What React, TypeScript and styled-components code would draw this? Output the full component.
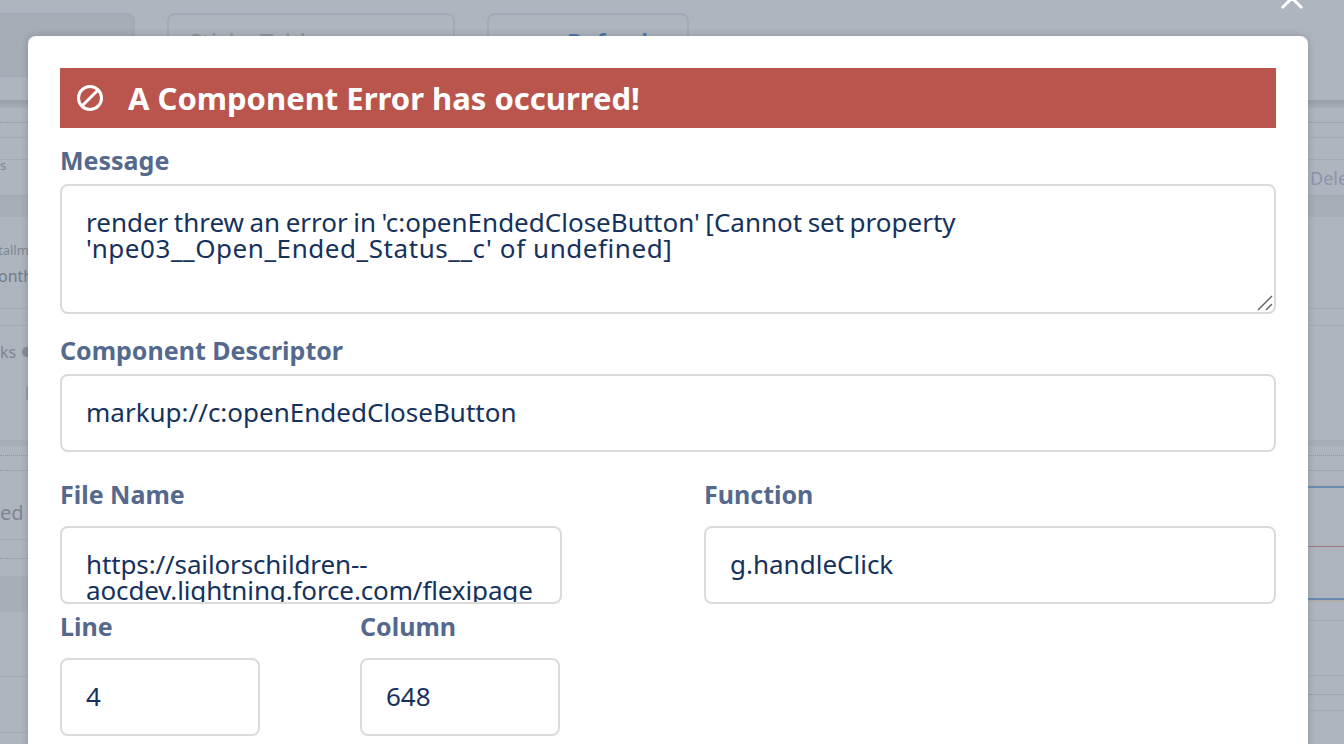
import { FunctionComponent } from "react";
import styled, { createGlobalStyle } from "styled-components";

const Global = createGlobalStyle`
  html, body {
    margin: 0;
    padding: 0;
    background: #aeb5be;
  }
  * {
    box-sizing: border-box;
  }
`;

const Page = styled.div`
  position: relative;
  width: 1344px;
  height: 744px;
  overflow: hidden;
  background: #aeb5be;
  font-family: "Noto Sans", "Open Sans", sans-serif;
`;

// the record page sitting behind the overlay
const Header = styled.div`
  display: flex;
  gap: 32px;
  height: 100px;
  padding-top: 13px;
  margin-left: -32px;
`;

const HeaderButton = styled.div<{ width: number; inset: number; dark?: boolean; link?: boolean }>`
  display: flex;
  gap: 10px;
  width: ${({ width }) => width}px;
  height: 64px;
  padding: 10px 0 0 ${({ inset }) => inset}px;
  border: 2px solid #a3aab5;
  border-radius: 8px;
  background: ${({ dark }) => (dark ? "#a6adb6" : "transparent")};
  color: ${({ link }) => (link ? "#4a74aa" : "#8f96a1")};
  font-size: 24px;
  font-weight: ${({ link }) => (link ? 600 : 400)};
  white-space: nowrap;
`;

const HeaderShadow = styled.div`
  height: 8px;
  background: linear-gradient(#979ea7, #a8afb8);
`;

const BackRow = styled.div<{
  height: number;
  fill?: string;
  line?: string;
  dotted?: boolean;
  top?: boolean;
}>`
  display: flex;
  align-items: ${({ top }) => (top ? "flex-start" : "center")};
  justify-content: space-between;
  height: ${({ height }) => height}px;
  background: ${({ fill }) => fill || "transparent"};
  border-bottom: ${({ line, dotted }) =>
    line ? `1px ${dotted ? "dotted" : "solid"} ${line}` : "none"};
  color: #7d8592;
  font-size: 20px;
  white-space: nowrap;
`;

const LeftBit = styled.div<{ lift?: number }>`
  display: flex;
  align-items: center;
  width: 28px;
  padding-bottom: ${({ lift }) => lift || 0}px;
  overflow: hidden;
`;

const RightBit = styled.span`
  width: 34px;
  overflow: hidden;
  color: #8d93ad;
  font-size: 18px;
`;

const SideStack = styled.div<{ pad: number }>`
  display: flex;
  flex-direction: column;
  width: 28px;
  padding-top: ${({ pad }) => pad}px;
  overflow: hidden;
`;

const SmallBit = styled.span`
  font-size: 13px;
  line-height: 18px;
`;

const CutBit = styled(SmallBit)`
  margin-left: -2px;
`;

const MediumBit = styled.span`
  margin: 6px 0 0 -2px;
  font-size: 16px;
  line-height: 22px;
  color: #737b88;
`;

const KeywordBit = styled.span`
  width: 22px;
  font-size: 16px;
  line-height: 18px;
`;

const HelpDot = styled.span`
  flex: none;
  width: 6px;
  height: 10px;
  border-radius: 5px 0 0 5px;
  background: #858c97;
`;

const SideMark = styled.div`
  align-self: flex-end;
  width: 2px;
  height: 13px;
  margin-top: 26px;
  background: #969da8;
`;

const LowerRows = styled.div`
  display: flex;
  justify-content: space-between;
`;

const LowerColumn = styled.div<{ width: number }>`
  width: ${({ width }) => width}px;
`;

const CloseIcon = styled.svg`
  position: absolute;
  top: -14px;
  left: 1280px;
  width: 24px;
  height: 24px;
  stroke: #fff;
  stroke-width: 3;
  stroke-linecap: square;
  fill: none;
`;

const Modal = styled.div`
  position: absolute;
  top: 36px;
  left: 28px;
  width: 1280px;
  height: 780px;
  padding: 32px;
  background: #fff;
  border-radius: 8px;
  box-shadow: 0 0 7px rgba(70, 80, 95, 0.35);
`;

const Banner = styled.div`
  display: flex;
  align-items: center;
  gap: 24px;
  height: 60px;
  padding-left: 16px;
  background: #ba554e;
  color: #fff;
  font-size: 31px;
  font-weight: 700;
`;

const BanIcon = styled.svg`
  width: 28px;
  height: 28px;
  stroke: #fff;
  stroke-width: 3;
  fill: none;
`;

const Label = styled.div<{ top: number; bottom: number }>`
  margin: ${({ top, bottom }) => `${top}px 0 ${bottom}px`};
  color: #54698d;
  font-size: 25px;
  line-height: 32px;
  font-weight: 700;
`;

const Field = styled.div<{ height: number }>`
  position: relative;
  width: 100%;
  height: ${({ height }) => height}px;
  padding: 23px 24px 0;
  border: 2px solid #dddbda;
  border-radius: 8px;
  overflow: hidden;
  color: #16325c;
  font-size: 26px;
  line-height: 26px;
`;

const TextLine = styled.div<{ tracking?: number; wordGap?: number }>`
  letter-spacing: ${({ tracking }) => tracking || 0}px;
  word-spacing: ${({ wordGap }) => wordGap || 0}px;
`;

const ResizeHandle = styled.svg`
  position: absolute;
  right: 1px;
  bottom: 1px;
  width: 16px;
  height: 16px;
  stroke: #666;
  stroke-width: 1.5;
  fill: none;
`;

const FileRow = styled.div`
  display: flex;
  justify-content: space-between;
`;

const FileColumn = styled.div<{ width: number }>`
  width: ${({ width }) => width}px;
`;

const PositionRow = styled.div`
  display: flex;
  gap: 100px;
`;

const GREY_LINE = "#a3aab3";
const DOT_LINE = "#8f95a3";
const SHADE = "#a7aeb7";

const leftRows = [
  { height: 55, line: GREY_LINE, text: "ed" },
  { height: 19, line: DOT_LINE, dotted: true },
  { height: 17 },
  { height: 36, fill: SHADE },
  { height: 65, line: GREY_LINE },
  { height: 56, line: GREY_LINE },
];

const rightRows = [
  { height: 1, fill: "#b5b1a8" },
  { height: 2, fill: "#6a8bb0" },
  { height: 59, line: "#a3757c" },
  { height: 51 },
  { height: 2, fill: "#6a8bb0" },
  { height: 2, fill: "#b0aea8" },
  { height: 19, line: GREY_LINE },
  { height: 55, line: GREY_LINE },
  { height: 19, line: DOT_LINE, dotted: true },
  { height: 16, line: GREY_LINE },
];

const App: FunctionComponent = () => {
  return (
    <Page>
      <Global />
      <Header>
        <HeaderButton width={167} inset={0} dark />
        <HeaderButton width={288} inset={20}>
          Sticky Table
        </HeaderButton>
        <HeaderButton width={202} inset={56} link>
          <span>↓</span>
          Refresh
        </HeaderButton>
      </Header>
      <HeaderShadow />
      <BackRow height={15} line={DOT_LINE} dotted />
      <BackRow height={15} line={GREY_LINE} />
      <BackRow height={22} line={GREY_LINE} />
      <BackRow height={36} line={GREY_LINE}>
        <LeftBit lift={26}>
          <SmallBit>s</SmallBit>
        </LeftBit>
        <RightBit>Dele</RightBit>
      </BackRow>
      <BackRow height={21} fill={SHADE} />
      <BackRow height={92} line={GREY_LINE} top>
        <SideStack pad={24}>
          <CutBit>tallm</CutBit>
          <MediumBit>onth</MediumBit>
        </SideStack>
      </BackRow>
      <BackRow height={17} line={GREY_LINE} />
      <BackRow height={114} top>
        <SideStack pad={17}>
          <LeftBit>
            <KeywordBit>ks</KeywordBit>
            <HelpDot />
          </LeftBit>
          <SideMark />
        </SideStack>
      </BackRow>
      <BackRow height={6} fill={SHADE} />
      <BackRow height={10} line={DOT_LINE} dotted />
      <BackRow height={15} line={DOT_LINE} dotted />
      <BackRow height={14} />
      <LowerRows>
        <LowerColumn width={28}>
          {leftRows.map((row, index) => (
            <BackRow key={index} {...row}>
              {row.text && <LeftBit>{row.text}</LeftBit>}
            </BackRow>
          ))}
        </LowerColumn>
        <LowerColumn width={36}>
          {rightRows.map((row, index) => (
            <BackRow key={index} {...row} />
          ))}
        </LowerColumn>
      </LowerRows>
      <CloseIcon viewBox="0 0 24 24">
        <path d="M3 3 L21 21 M21 3 L3 21" />
      </CloseIcon>
      <Modal>
        <Banner>
          <BanIcon viewBox="0 0 28 28">
            <circle cx="14" cy="14" r="11.5" />
            <path d="M6 22 L22 6" />
          </BanIcon>
          A Component Error has occurred!
        </Banner>
        <Label top={16} bottom={8}>
          Message
        </Label>
        <Field height={130}>
          <TextLine wordGap={-1.3}>
            render threw an error in 'c:openEndedCloseButton' [Cannot set property
          </TextLine>
          <TextLine tracking={0.57}>'npe03__Open_Ended_Status__c' of undefined]</TextLine>
          <ResizeHandle viewBox="0 0 16 16">
            <path d="M1 15 L15 1 M9 15 L15 9" />
          </ResizeHandle>
        </Field>
        <Label top={20} bottom={8}>
          Component Descriptor
        </Label>
        <Field height={78}>markup://c:openEndedCloseButton</Field>
        <FileRow>
          <FileColumn width={502}>
            <Label top={26} bottom={16}>
              File Name
            </Label>
            <Field height={78}>
              <TextLine tracking={-0.13}>https://sailorschildren--aocdev.lightning.force.com/flexipage</TextLine>
            </Field>
          </FileColumn>
          <FileColumn width={572}>
            <Label top={26} bottom={16}>
              Function
            </Label>
            <Field height={78}>g.handleClick</Field>
          </FileColumn>
        </FileRow>
        <PositionRow>
          <FileColumn width={200}>
            <Label top={6} bottom={16}>
              Line
            </Label>
            <Field height={78}>4</Field>
          </FileColumn>
          <FileColumn width={200}>
            <Label top={6} bottom={16}>
              Column
            </Label>
            <Field height={78}>648</Field>
          </FileColumn>
        </PositionRow>
      </Modal>
    </Page>
  );
};

export default App;
